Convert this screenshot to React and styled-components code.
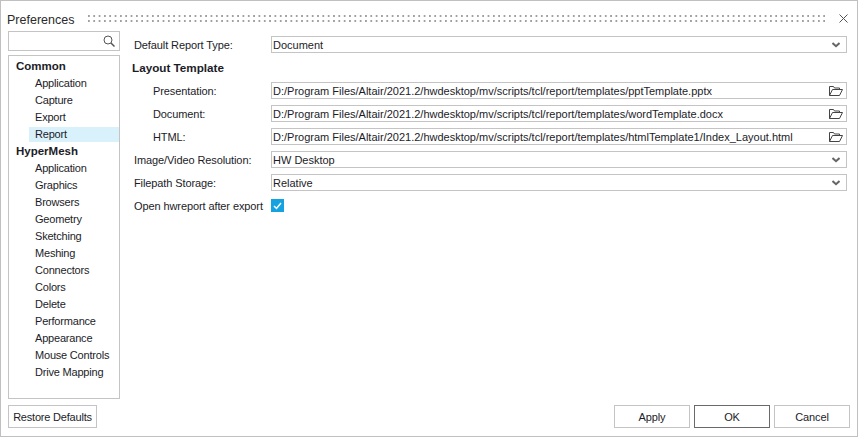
import React from 'react';
import styled, { createGlobalStyle } from 'styled-components';

const GlobalStyle = createGlobalStyle`
  html, body {
    margin: 0;
    padding: 0;
    background: #fff;
  }
  * {
    box-sizing: border-box;
  }
`;

const Window = styled.div`
  display: flex;
  flex-direction: column;
  width: 858px;
  height: 437px;
  background: #fff;
  border: 1px solid #c0c0c0;
  color: #1c1c28;
  font-family: "Liberation Sans", Roboto, sans-serif;
  font-size: 11px;
  white-space: nowrap;
`;

const TitleBar = styled.div`
  display: flex;
  align-items: center;
  height: 30px;
  padding: 6px 9px 0 6px;
`;

const Title = styled.div`
  width: 81px;
  padding-top: 1px;
  font-size: 12.5px;
  color: #2a2a2a;
`;

const Grip = styled.div`
  flex: 1;
  height: 8px;
  margin-right: 11px;
  background-image: radial-gradient(circle at 1px 1px, #a0a0a0 1px, transparent 1.2px);
  background-size: 5.33px 5px;
`;

const CloseButton = styled.svg`
  width: 9px;
  height: 9px;
  margin-bottom: 1px;
  stroke: #555;
  stroke-width: 1;
  fill: none;
`;

const Body = styled.div`
  flex: 1;
  display: flex;
  min-height: 0;
  padding: 0 10px 0 7px;
`;

const Sidebar = styled.div`
  display: flex;
  flex-direction: column;
  width: 112px;
  margin-right: 11px;
`;

const SearchBox = styled.div`
  display: flex;
  justify-content: flex-end;
  align-items: center;
  height: 20px;
  padding-right: 4px;
  border: 1px solid #c4c4c4;
  margin-bottom: 4px;
`;

const Tree = styled.div`
  display: flex;
  flex-direction: column;
  height: 344px;
  padding: 2px 0;
  border: 1px solid #c4c4c4;
`;

const TreeGroup = styled.div`
  height: 17px;
  line-height: 17px;
  padding-left: 7px;
  font-weight: 700;
  font-size: 11.5px;
`;

const TreeItem = styled.div`
  height: 15px;
  line-height: 15px;
  margin: 1px 0 1px 20px;
  padding-left: 6px;
  letter-spacing: -0.2px;
  background: ${(props) => (props.$selected ? '#d9f1fb' : 'transparent')};
`;

const Form = styled.div`
  flex: 1;
  display: flex;
  flex-direction: column;
  padding-top: 5px;
`;

const Row = styled.div`
  display: flex;
  align-items: center;
  height: 17px;
  margin-bottom: 6px;
`;

const Label = styled.div`
  width: 140px;
  flex: none;
  padding-left: ${(props) => (props.$nested ? '22px' : '3px')};
  letter-spacing: -0.1px;
`;

const Heading = styled.div`
  height: 17px;
  line-height: 18px;
  margin-bottom: 6px;
  padding-left: 1px;
  font-weight: 700;
  font-size: 11.7px;
`;

const Field = styled.div`
  flex: 1;
  display: flex;
  align-items: center;
  justify-content: space-between;
  height: 17px;
  padding: 0 3px 0 1px;
  border: 1px solid #c4c4c4;
`;

const Check = styled.div`
  display: flex;
  align-items: center;
  justify-content: center;
  width: 13px;
  height: 13px;
  background: #14a3e0;
`;

const Footer = styled.div`
  display: flex;
  align-items: flex-start;
  height: 36px;
  padding: 5px 7px 0 7px;
`;

const Button = styled.div`
  display: flex;
  align-items: center;
  justify-content: center;
  width: ${(props) => props.$w || 76}px;
  height: 23px;
  margin-left: 4px;
  letter-spacing: -0.1px;
  border: 1px solid ${(props) => (props.$primary ? '#6a6a6a' : '#c4c4c4')};
`;

const RestoreButton = styled(Button)`
  margin: 0 auto 0 0;
  letter-spacing: -0.2px;
`;

const ChevronMark = styled.svg`
  width: 8px;
  height: 6px;
  margin-right: 3px;
  fill: none;
  stroke: #666;
  stroke-width: 2;
`;

const Chevron = () => (
  <ChevronMark viewBox="0 0 8 6">
    <path d="M.5 1L4 4.2 7.5 1" />
  </ChevronMark>
);

const FolderIcon = () => (
  <svg width="14" height="11" viewBox="0 0 14 11" fill="none" stroke="#444" strokeWidth="1">
    <path d="M.5 10.5V1.5h4l1 1.5h5v1.5" />
    <path d="M.5 10.5h10l3-6H3.5z" />
  </svg>
);

const SearchIcon = () => (
  <svg width="12" height="12" viewBox="0 0 12 12" fill="none" stroke="#555">
    <circle cx="5" cy="5" r="4" />
    <path d="M8 8l3.5 3.5" strokeWidth="1.5" />
  </svg>
);

const COMMON = ['Application', 'Capture', 'Export', 'Report'];
const HYPERMESH = [
  'Application', 'Graphics', 'Browsers', 'Geometry', 'Sketching', 'Meshing', 'Connectors',
  'Colors', 'Delete', 'Performance', 'Appearance', 'Mouse Controls', 'Drive Mapping',
];
const BASE = 'D:/Program Files/Altair/2021.2/hwdesktop/mv/scripts/tcl/report/templates/';

export default function App() {
  return (
    <>
      <GlobalStyle />
      <Window>
        <TitleBar>
          <Title>Preferences</Title>
          <Grip />
          <CloseButton viewBox="0 0 9 9"><path d="M.5.5l8 8M8.5.5l-8 8" /></CloseButton>
        </TitleBar>
        <Body>
          <Sidebar>
            <SearchBox><SearchIcon /></SearchBox>
            <Tree>
              <TreeGroup>Common</TreeGroup>
              {COMMON.map((name) => (
                <TreeItem key={name} $selected={name === 'Report'}>{name}</TreeItem>
              ))}
              <TreeGroup>HyperMesh</TreeGroup>
              {HYPERMESH.map((name) => (
                <TreeItem key={name}>{name}</TreeItem>
              ))}
            </Tree>
          </Sidebar>
          <Form>
            <Row>
              <Label>Default Report Type:</Label>
              <Field>Document<Chevron /></Field>
            </Row>
            <Heading>Layout Template</Heading>
            <Row>
              <Label $nested>Presentation:</Label>
              <Field>{BASE}pptTemplate.pptx<FolderIcon /></Field>
            </Row>
            <Row>
              <Label $nested>Document:</Label>
              <Field>{BASE}wordTemplate.docx<FolderIcon /></Field>
            </Row>
            <Row>
              <Label $nested>HTML:</Label>
              <Field>{BASE}htmlTemplate1/Index_Layout.html<FolderIcon /></Field>
            </Row>
            <Row>
              <Label>Image/Video Resolution:</Label>
              <Field>HW Desktop<Chevron /></Field>
            </Row>
            <Row>
              <Label>Filepath Storage:</Label>
              <Field>Relative<Chevron /></Field>
            </Row>
            <Row>
              <Label>Open hwreport after export</Label>
              <Check>
                <svg width="9" height="8" viewBox="0 0 9 8" fill="none" stroke="#fff" strokeWidth="1.5">
                  <path d="M1 4l2.5 2.5L8 1" />
                </svg>
              </Check>
            </Row>
          </Form>
        </Body>
        <Footer>
          <RestoreButton $w={89}>Restore Defaults</RestoreButton>
          <Button>Apply</Button>
          <Button $primary>OK</Button>
          <Button>Cancel</Button>
        </Footer>
      </Window>
    </>
  );
}
